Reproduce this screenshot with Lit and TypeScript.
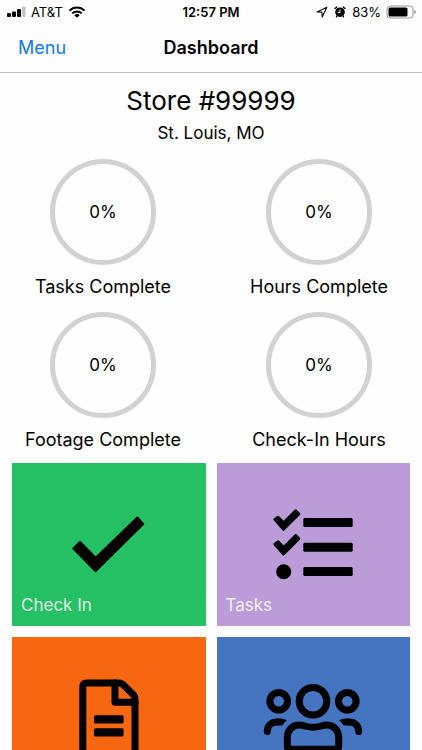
import { LitElement, html, css, svg } from "lit";
import { customElement, property } from "lit/decorators.js";

const listCheck = svg`<path class="cut" d="M22 24.5 25 22.2 30.7 27.8 42.7 15.8 45.8 19 30.5 34.3Z"/>`;

const icons = {
  check: svg`<path class="cut" d="M24.5 53.5 31 47.2 46.7 63 88.5 22.7 94 29 46.5 76Z"/>`,
  tasks: svg`
    <g class="bold">${listCheck}</g>
    <g class="bold" transform="translate(0 24.7)">${listCheck}</g>
    <circle cx="30.7" cy="76.7" r="7.5"/>
    <rect x="50.3" y="23" width="49.4" height="9" rx="1.5"/>
    <rect x="50.3" y="47.7" width="49.4" height="9" rx="1.5"/>
    <rect x="50.3" y="72" width="49.4" height="9" rx="1.5"/>`,
  document: svg`
    <path class="line" d="M37.8 14H70.5Q72.5 14 74 15.5L84.6 26Q86 27.5 86 29.5V82Q86 86 82 86H37.8Q33.8 86 33.8 82V18Q33.8 14 37.8 14Z"/>
    <path class="line" d="M66 14V33.2H86"/>
    <rect x="45" y="46.2" width="29.6" height="8.3" rx="1.6"/>
    <rect x="45" y="59.2" width="29.6" height="8.3" rx="1.6"/>`,
  team: svg`
    <circle class="line" cx="60" cy="32.2" r="13.8"/>
    <circle class="line" cx="25.7" cy="32.2" r="8.8"/>
    <circle class="line" cx="94.3" cy="32.2" r="8.8"/>
    <path class="line" d="M34.3 77V68.5C34.3 61 39.5 56 46.5 56C51 56 53.5 58.3 60 58.3S69 56 73.5 56C80.5 56 85.7 61 85.7 68.5V77Q85.7 80.2 82.5 80.2H37.5Q34.3 80.2 34.3 77Z"/>
    <path class="line" d="M14.3 62.5C14.3 56.5 18.5 53 24 53"/>
    <path d="M24 49.5H27.5Q31 49.5 34 51.5Q31 53.5 29.3 56.5H24Z"/>
    <path class="line" d="M105.7 62.5C105.7 56.5 101.5 53 96 53"/>
    <path d="M96 49.5H92.5Q89 49.5 86 51.5Q89 53.5 90.7 56.5H96Z"/>`,
};

type IconName = keyof typeof icons;

@customElement("status-bar")
class StatusBar extends LitElement {
  static styles = css`
    :host {
      display: grid;
      grid-template-columns: 1fr auto 1fr;
      align-items: center;
      height: 24px;
      padding: 0 6px;
      font-size: 13px;
      line-height: 16px;
    }
    .side {
      display: flex;
      align-items: center;
      gap: 5px;
    }
    .end {
      justify-content: flex-end;
    }
    .time {
      font-weight: 600;
    }
    svg {
      display: block;
    }
  `;

  render() {
    return html`
      <div class="side">
        <svg width="20" height="12" viewBox="0 0 20 12" aria-hidden="true">
          <rect x="1" y="7" width="4" height="4" rx="1" />
          <rect x="6" y="5.5" width="4" height="5.5" rx="1" />
          <rect x="11" y="3" width="4" height="8" rx="1" />
          <rect x="16" y="0.5" width="3.5" height="10.5" rx="1" fill="#c4c4c4" />
        </svg>
        <span>AT&amp;T</span>
        <svg width="18" height="12" viewBox="0 0 18 12" aria-hidden="true">
          <g fill="none" stroke="#000" stroke-width="2">
            <path d="M1.5 4.6A10.6 10.6 0 0 1 16.5 4.6" />
            <path d="M4.3 7.4A6.6 6.6 0 0 1 13.7 7.4" />
          </g>
          <path d="M9 11.8 6.3 9.2A3.9 3.9 0 0 1 11.7 9.2Z" />
        </svg>
      </div>
      <span class="time">12:57 PM</span>
      <div class="side end">
        <svg width="12" height="12" viewBox="0 0 12 12" aria-hidden="true">
          <path d="M1 6 10.8 1.2 6.2 11 5.8 6.2Z" fill="none" stroke="#111" stroke-width="1.2" stroke-linejoin="round" />
        </svg>
        <svg width="14" height="14" viewBox="0 0 14 14" aria-hidden="true">
          <circle cx="7" cy="7.2" r="4.8" />
          <path d="M2 3.6 3.8 2M12 3.6 10.2 2M4 11 3.4 11.8M10 11 10.6 11.8" stroke="#000" stroke-width="1.3" stroke-linecap="round" />
          <path d="M7 4.5V7.5H4.8" fill="none" stroke="#fff" stroke-width="1" />
        </svg>
        <span>83%</span>
        <svg width="30" height="14" viewBox="0 0 30 14" aria-hidden="true">
          <rect x="1" y="1" width="26" height="12" rx="3" fill="none" stroke="#999" stroke-width="1" />
          <rect x="2.5" y="2.5" width="19" height="9" rx="1.5" />
          <path d="M28.3 5V9Q29.7 8.5 29.7 7T28.3 5Z" fill="#777" />
        </svg>
      </div>
    `;
  }
}

@customElement("progress-ring")
class ProgressRing extends LitElement {
  @property({ type: Number }) value = 0;
  @property() label = "";

  static styles = css`
    :host {
      display: flex;
      flex-direction: column;
      align-items: center;
      gap: 10px;
      font-size: 18px;
      line-height: 24px;
    }
    .ring {
      box-sizing: border-box;
      display: grid;
      place-items: center;
      width: 106px;
      height: 106px;
      border: 5px solid #d2d2d2;
      border-radius: 50%;
      font-size: 17px;
    }
  `;

  render() {
    return html`
      <div class="ring">${this.value}%</div>
      <div>${this.label}</div>
    `;
  }
}

@customElement("menu-tile")
class MenuTile extends LitElement {
  @property() icon: IconName = "check";
  @property() label = "";
  @property() color = "";

  static styles = css`
    button {
      display: grid;
      place-items: center;
      box-sizing: border-box;
      position: relative;
      width: 100%;
      height: 163px;
      padding: 0;
      border: 0;
      color: #fff;
      font: inherit;
      font-size: 17px;
      line-height: 24px;
      cursor: pointer;
    }
    svg {
      display: block;
      fill: #000;
    }
    .cut {
      stroke: #000;
      stroke-width: 2.4;
      stroke-linejoin: round;
    }
    .bold .cut {
      stroke-width: 3;
    }
    .line {
      fill: none;
      stroke: #000;
      stroke-width: 7;
      stroke-linecap: round;
      stroke-linejoin: round;
    }
    .label {
      position: absolute;
      left: 9px;
      bottom: 9px;
      opacity: 0.85;
    }
  `;

  render() {
    return html`
      <button type="button" style="background:${this.color}">
        <svg width="120" height="100" viewBox="0 0 120 100" aria-hidden="true">${icons[this.icon]}</svg>
        <span class="label">${this.label}</span>
      </button>
    `;
  }
}

@customElement("app-root")
class AppRoot extends LitElement {
  static styles = css`
    :host {
      display: flex;
      flex-direction: column;
      height: 100vh;
      overflow: hidden;
      background: #fefefe;
      color: #000;
      font-family: Inter, "Liberation Sans", sans-serif;
    }
    header {
      flex: none;
      border-bottom: 1px solid #bebebe;
    }
    nav {
      display: grid;
      grid-template-columns: 1fr auto 1fr;
      align-items: center;
      height: 48px;
      padding: 0 18px;
      font-size: 18px;
      line-height: 24px;
    }
    nav a {
      justify-self: start;
      color: #0f78ee;
      text-decoration: none;
    }
    nav h1 {
      margin: 0;
      font-size: 18px;
      font-weight: 600;
    }
    main {
      flex: 1;
      min-height: 0;
      overflow-y: auto;
      scrollbar-width: none;
      padding-top: 12px;
    }
    .store {
      text-align: center;
    }
    h2 {
      margin: 0 0 4px;
      font-size: 26px;
      font-weight: 400;
      line-height: 32px;
    }
    .store p {
      margin: 0;
      font-size: 17px;
      line-height: 24px;
    }
    .stats {
      display: grid;
      grid-template-columns: 1fr 1fr;
      gap: 13px 10px;
      padding: 14px 0 11px;
    }
    .tiles {
      display: grid;
      grid-template-columns: 1fr 1fr;
      gap: 11px;
      padding: 0 12px 12px;
    }
  `;

  private stats = [
    { label: "Tasks Complete", value: 0 },
    { label: "Hours Complete", value: 0 },
    { label: "Footage Complete", value: 0 },
    { label: "Check-In Hours", value: 0 },
  ];

  private tiles: { label: string; icon: IconName; color: string }[] = [
    { label: "Check In", icon: "check", color: "#25c063" },
    { label: "Tasks", icon: "tasks", color: "#bb9cd9" },
    { label: "", icon: "document", color: "#f76711" },
    { label: "", icon: "team", color: "#4574c1" },
  ];

  render() {
    return html`
      <header>
        <status-bar></status-bar>
        <nav>
          <a href="#menu">Menu</a>
          <h1>Dashboard</h1>
        </nav>
      </header>
      <main>
        <section class="store">
          <h2>Store #99999</h2>
          <p>St. Louis, MO</p>
        </section>
        <section class="stats">
          ${this.stats.map((s) => html`<progress-ring .value=${s.value} .label=${s.label}></progress-ring>`)}
        </section>
        <section class="tiles">
          ${this.tiles.map((t) => html`<menu-tile .icon=${t.icon} .label=${t.label} .color=${t.color}></menu-tile>`)}
        </section>
      </main>
    `;
  }
}
